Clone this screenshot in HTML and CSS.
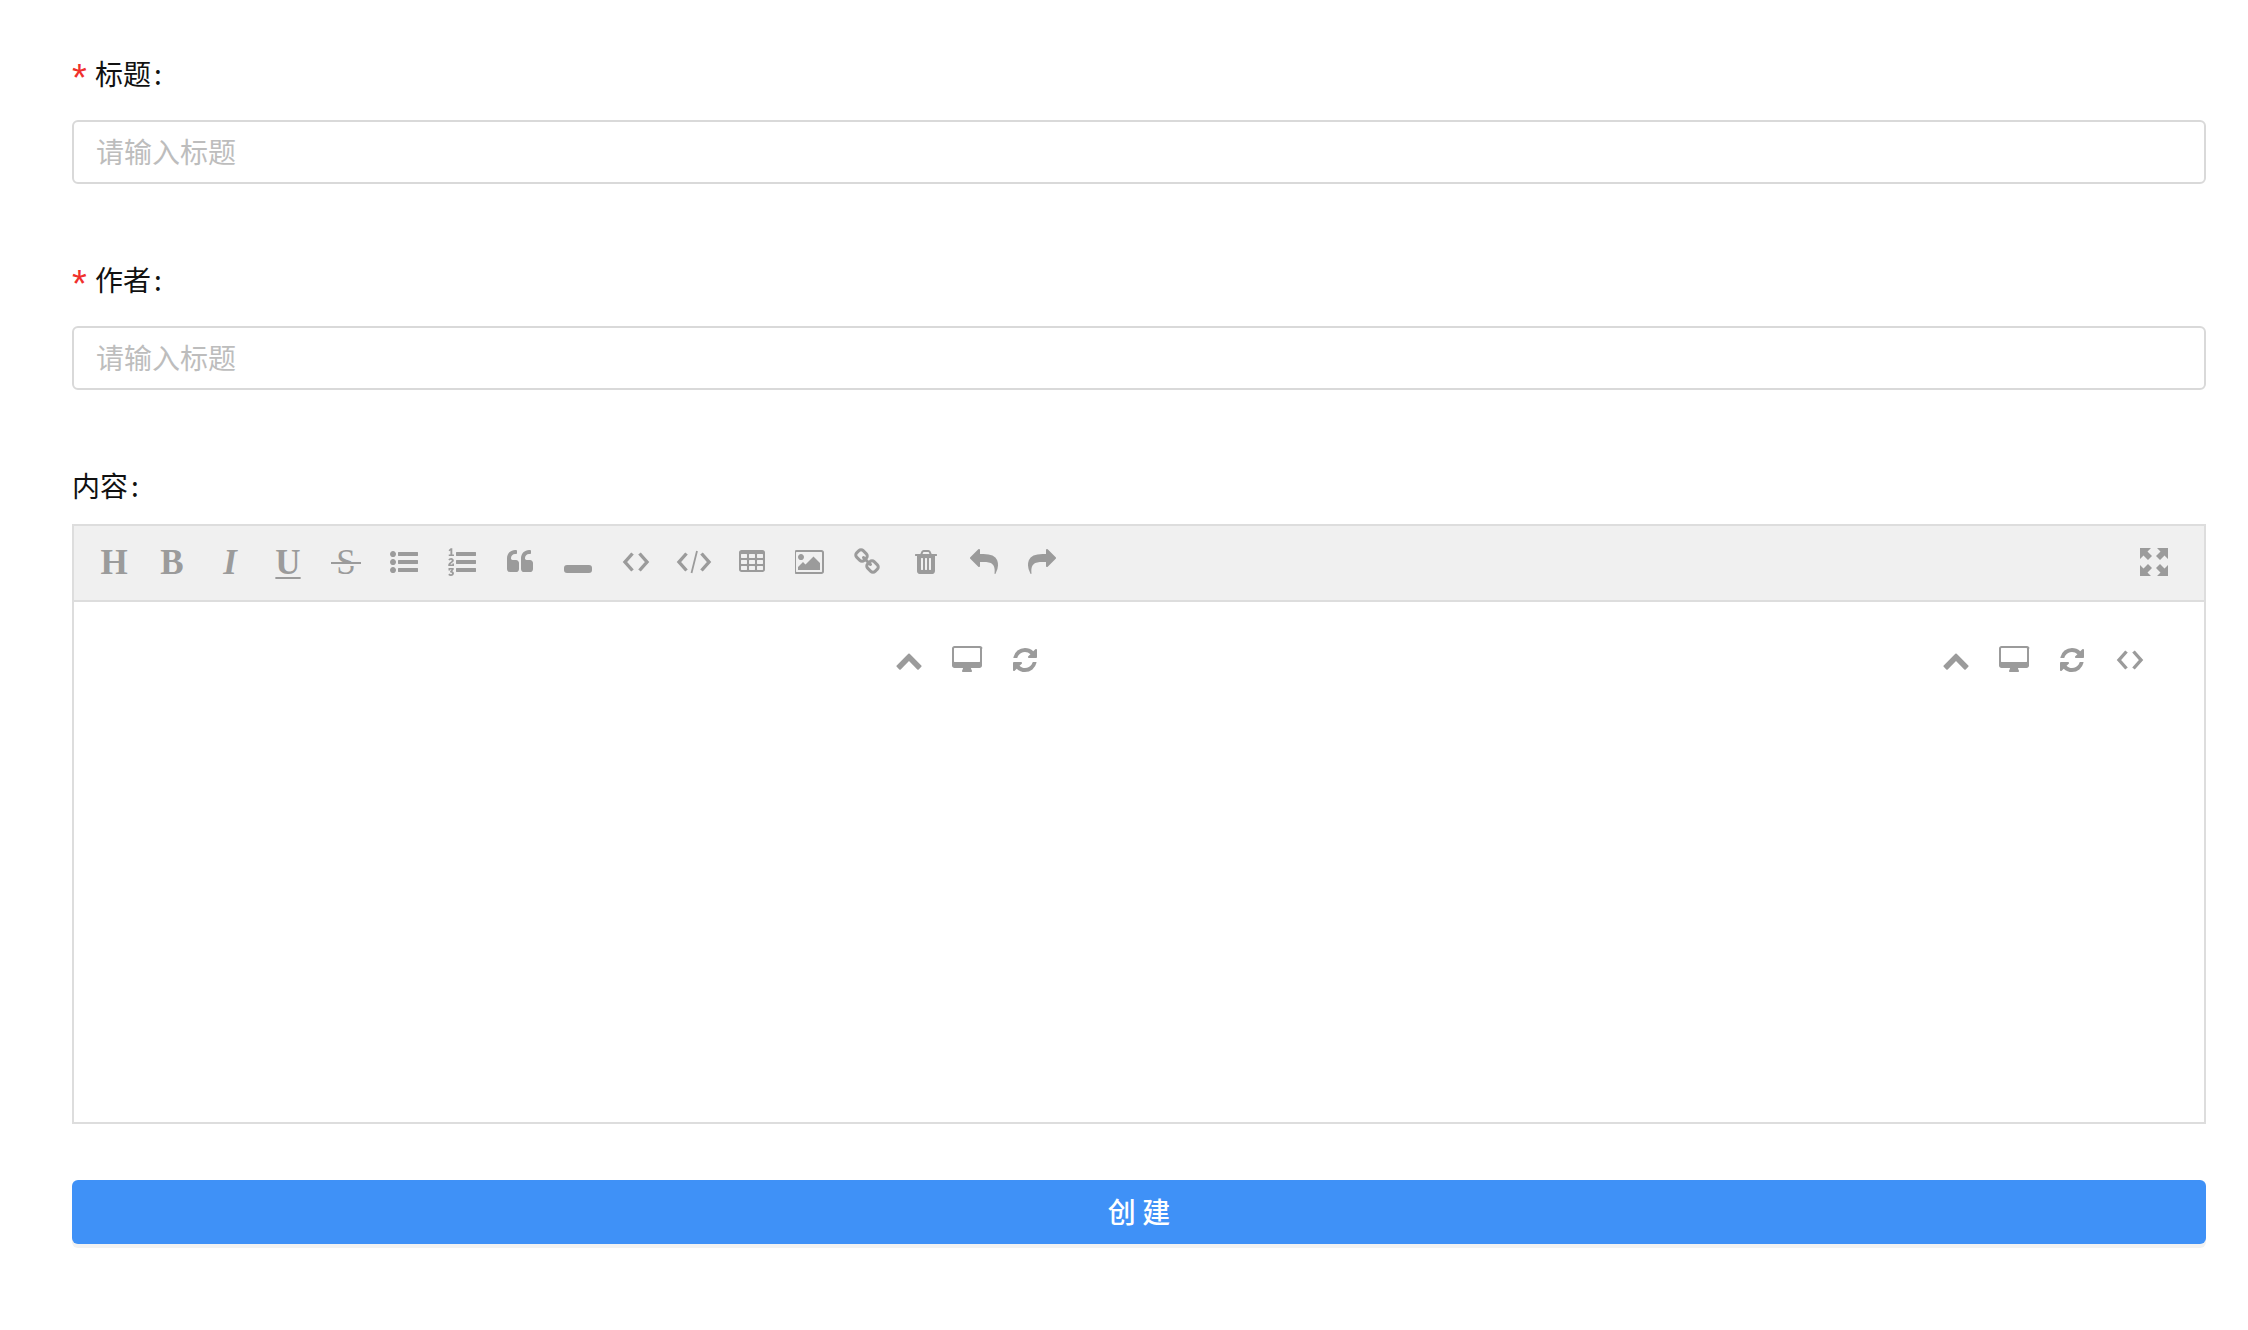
FILE: index.html
```html
<!DOCTYPE html>
<html lang="zh-CN">
<head>
<meta charset="utf-8">
<title>创建</title>
<link rel="stylesheet" href="styles.css">
</head>
<body>
<svg class="defs" xmlns="http://www.w3.org/2000/svg">
  <symbol id="i-ul" viewBox="0 0 1792 1792"><path d="M384 1408q0 80-56 136t-136 56-136-56-56-136 56-136 136-56 136 56 56 136zm0-512q0 80-56 136t-136 56-136-56-56-136 56-136 136-56 136 56 56 136zm1408 416v192q0 13-9.5 22.5t-22.5 9.5h-1216q-13 0-22.5-9.5t-9.5-22.5v-192q0-13 9.5-22.5t22.5-9.5h1216q13 0 22.5 9.5t9.5 22.5zm-1408-928q0 80-56 136t-136 56-136-56-56-136 56-136 136-56 136 56 56 136zm1408 416v192q0 13-9.5 22.5t-22.5 9.5h-1216q-13 0-22.5-9.5t-9.5-22.5v-192q0-13 9.5-22.5t22.5-9.5h1216q13 0 22.5 9.5t9.5 22.5zm0-512v192q0 13-9.5 22.5t-22.5 9.5h-1216q-13 0-22.5-9.5t-9.5-22.5v-192q0-13 9.5-22.5t22.5-9.5h1216q13 0 22.5 9.5t9.5 22.5z"/></symbol>
  <symbol id="i-ol" viewBox="0 0 1792 1792"><path d="M381 1620q0 80-54.500 126t-135.500 46q-106 0-172-66l57-88q49 45 106 45 29 0 50.500-14.500t21.500-42.500q0-64-105-56l-26-56q8-10 32.500-43.500t42.500-54 37-38.500v-1q-16 0-48.500 1t-48.500 1v53h-106v-152h333v88l-95 115q51 12 81 49t30 88zm2-627v159h-362q-6-36-6-54 0-51 23.500-93t56.500-68 66-47.500 56.500-43.500 23.500-45q0-25-14.500-38.500t-39.500-13.500q-46 0-81 58l-85-59q24-51 71.500-79.500t105.500-28.500q73 0 123 41.500t50 112.500q0 50-34 91.500t-75 64.500-75.500 50.500-35.500 52.500h127v-60h105zm1409 319v192q0 13-9.500 22.500t-22.500 9.500h-1216q-13 0-22.500-9.500t-9.500-22.500v-192q0-14 9-23t23-9h1216q13 0 22.500 9.500t9.500 22.500zm-1408-899v99h-335v-99h107q0-41 .5-122t.5-121v-12h-2q-8 17-50 54l-71-76 136-127h106v404h108zm1408 387v192q0 13-9.500 22.500t-22.500 9.500h-1216q-13 0-22.500-9.500t-9.500-22.500v-192q0-14 9-23t23-9h1216q13 0 22.500 9.500t9.500 22.500zm0-512v192q0 13-9.500 22.500t-22.500 9.500h-1216q-13 0-22.500-9.500t-9.500-22.500v-192q0-13 9.500-22.500t22.500-9.500h1216q13 0 22.500 9.500t9.500 22.500z"/></symbol>
  <symbol id="i-quote" viewBox="0 0 1792 1792"><path d="M832 960v384q0 80-56 136t-136 56h-384q-80 0-136-56t-56-136v-704q0-104 40.500-198.500t109.500-163.500 163.500-109.500 198.500-40.500h64q26 0 45 19t19 45v128q0 26-19 45t-45 19h-64q-106 0-181 75t-75 181v32q0 40 28 68t68 28h224q80 0 136 56t56 136zm896 0v384q0 80-56 136t-136 56h-384q-80 0-136-56t-56-136v-704q0-104 40.500-198.500t109.500-163.500 163.500-109.500 198.500-40.500h64q26 0 45 19t19 45v128q0 26-19 45t-45 19h-64q-106 0-181 75t-75 181v32q0 40 28 68t68 28h224q80 0 136 56t56 136z"/></symbol>
  <symbol id="i-code" viewBox="0 0 28 28"><path class="stroke" d="M10.500 5.500L3 14l7.500 8.500M17.500 5.500L25 14l-7.500 8.500"/></symbol>
  <symbol id="i-tag" viewBox="0 0 36 28"><path class="stroke" d="M10.500 5.500L3 14l7.500 8.500M25.500 5.500L33 14l-7.500 8.500"/><path class="thin" d="M21 3L15.500 25"/></symbol>
  <symbol id="i-table" viewBox="0 0 1792 1792"><path d="M576 1376v-192q0-14-9-23t-23-9h-320q-14 0-23 9t-9 23v192q0 14 9 23t23 9h320q14 0 23-9t9-23zm0-384v-192q0-14-9-23t-23-9h-320q-14 0-23 9t-9 23v192q0 14 9 23t23 9h320q14 0 23-9t9-23zm512 384v-192q0-14-9-23t-23-9h-320q-14 0-23 9t-9 23v192q0 14 9 23t23 9h320q14 0 23-9t9-23zm-512-768v-192q0-14-9-23t-23-9h-320q-14 0-23 9t-9 23v192q0 14 9 23t23 9h320q14 0 23-9t9-23zm512 384v-192q0-14-9-23t-23-9h-320q-14 0-23 9t-9 23v192q0 14 9 23t23 9h320q14 0 23-9t9-23zm512 384v-192q0-14-9-23t-23-9h-320q-14 0-23 9t-9 23v192q0 14 9 23t23 9h320q14 0 23-9t9-23zm-512-768v-192q0-14-9-23t-23-9h-320q-14 0-23 9t-9 23v192q0 14 9 23t23 9h320q14 0 23-9t9-23zm512 384v-192q0-14-9-23t-23-9h-320q-14 0-23 9t-9 23v192q0 14 9 23t23 9h320q14 0 23-9t9-23zm0-384v-192q0-14-9-23t-23-9h-320q-14 0-23 9t-9 23v192q0 14 9 23t23 9h320q14 0 23-9t9-23zm128-320v1088q0 66-47 113t-113 47h-1344q-66 0-113-47t-47-113v-1088q0-66 47-113t113-47h1344q66 0 113 47t47 113z"/></symbol>
  <symbol id="i-pic" viewBox="0 0 1920 1792"><path d="M576 576q0 80-56 136t-136 56-136-56-56-136 56-136 136-56 136 56 56 136zm1024 384v448h-1408v-192l320-320 160 160 512-512zm96-704h-1600q-13 0-22.500 9.500t-9.500 22.500v1216q0 13 9.500 22.500t22.500 9.500h1600q13 0 22.500-9.500t9.500-22.500v-1216q0-13-9.500-22.500t-22.500-9.500zm160 32v1216q0 66-47 113t-113 47h-1600q-66 0-113-47t-47-113v-1216q0-66 47-113t113-47h1600q66 0 113 47t47 113z"/></symbol>
  <symbol id="i-link" viewBox="0 0 1792 1792"><path d="M1456 1216q0-40-28-68l-208-208q-28-28-68-28-42 0-72 32 3 3 19 18.500t21.500 21.500 15 19 13 25.500 3.500 27.500q0 40-28 68t-68 28q-15 0-27.500-3.500t-25.500-13-19-15-21.500-21.500-18.500-19q-33 31-33 73 0 40 28 68l206 207q27 27 68 27 40 0 68-26l147-146q28-28 28-67zm-703-705q0-40-28-68l-206-207q-28-28-68-28-39 0-68 27l-147 146q-28 28-28 67 0 40 28 68l208 208q27 27 68 27 42 0 72-31-3-3-19-18.500t-21.500-21.500-15-19-13-25.500-3.500-27.500q0-40 28-68t68-28q15 0 27.500 3.500t25.500 13 19 15 21.500 21.500 18.500 19q33-31 33-73zm895 705q0 120-85 203l-147 146q-83 83-203 83-121 0-204-85l-206-207q-83-83-83-203 0-123 88-209l-88-88q-86 88-208 88-120 0-204-84l-208-208q-84-84-84-204t85-203l147-146q83-83 203-83 121 0 204 85l206 207q83 83 83 203 0 123-88 209l88 88q86-88 208-88 120 0 204 84l208 208q84 84 84 204z"/></symbol>
  <symbol id="i-trash" viewBox="0 0 1792 1792"><path d="M704 1376v-704q0-14-9-23t-23-9h-64q-14 0-23 9t-9 23v704q0 14 9 23t23 9h64q14 0 23-9t9-23zm256 0v-704q0-14-9-23t-23-9h-64q-14 0-23 9t-9 23v704q0 14 9 23t23 9h64q14 0 23-9t9-23zm256 0v-704q0-14-9-23t-23-9h-64q-14 0-23 9t-9 23v704q0 14 9 23t23 9h64q14 0 23-9t9-23zm-544-992h448l-48-117q-7-9-17-11h-317q-10 2-17 11zm928 32v64q0 14-9 23t-23 9h-96v948q0 83-47 143.500t-113 60.500h-832q-66 0-113-58.500t-47-141.500v-952h-96q-14 0-23-9t-9-23v-64q0-14 9-23t23-9h309l70-167q15-37 54-63t79-26h320q40 0 79 26t54 63l70 167h309q14 0 23 9t9 23z"/></symbol>
  <symbol id="i-undo" viewBox="0 0 1792 1792"><path d="M1792 1120q0 166-127 451-3 7-10.500 24t-13.500 30-13 22q-12 17-28 17-15 0-23.500-10t-8.500-25q0-9 2.500-26.500t2.500-23.500q5-68 5-123 0-101-17.500-181t-48.500-138.500-80-101-105.500-69.500-133-42.500-154-21.500-175.500-6h-224v256q0 26-19 45t-45 19-45-19l-512-512q-19-19-19-45t19-45l512-512q19-19 45-19t45 19 19 45v256h224q713 0 875 403 53 134 53 333z"/></symbol>
  <symbol id="i-redo" viewBox="0 0 1792 1792"><path d="M1792 640q0 26-19 45l-512 512q-19 19-45 19t-45-19-19-45v-256h-224q-98 0-175.500 6t-154 21.500-133 42.500-105.500 69.500-80 101-48.500 138.500-17.500 181q0 55 5 123 0 6 2.500 23.500t2.500 26.500q0 15-8.500 25t-23.500 10q-16 0-28-17-7-9-13-22t-13.500-30-10.500-24q-127-285-127-451 0-199 53-333 162-403 875-403h224v-256q0-26 19-45t45-19 45 19l512 512q19 19 19 45z"/></symbol>
  <symbol id="i-full" viewBox="0 0 28 28"><path d="M0 0H11L7.500 3.500 12 8 8 12 3.500 7.500 0 11zM28 0V11L24.500 7.500 20 12 16 8 20.500 3.500 17 0zM0 28V17L3.500 20.500 8 16 12 20 7.500 24.500 11 28zM28 28H17L20.500 24.500 16 20 20 16 24.500 20.500 28 17z"/></symbol>
  <symbol id="i-up" viewBox="0 0 1792 1792"><path d="M1683 1331l-166 165q-19 19-45 19t-45-19l-531-531-531 531q-19 19-45 19t-45-19l-166-165q-19-19-19-45.500t19-45.500l742-741q19-19 45-19t45 19l742 741q19 19 19 45.500t-19 45.500z"/></symbol>
  <symbol id="i-desk" viewBox="0 0 2048 1792"><path d="M1856 992v-832q0-13-9.500-22.500t-22.500-9.500h-1600q-13 0-22.500 9.500t-9.500 22.500v832q0 13 9.500 22.500t22.500 9.500h1600q13 0 22.500-9.500t9.500-22.500zm128-832v1088q0 66-47 113t-113 47h-544q0 37 16 77.500t32 71 16 43.500q0 26-19 45t-45 19h-512q-26 0-45-19t-19-45q0-14 16-44t32-70 16-78h-544q-66 0-113-47t-47-113v-1088q0-66 47-113t113-47h1632q66 0 113 47t47 113z"/></symbol>
  <symbol id="i-sync" viewBox="0 0 1792 1792"><path d="M1639 1056q0 5-1 7-64 268-268 434.500t-478 166.500q-146 0-282.500-55t-243.500-157l-129 129q-19 19-45 19t-45-19-19-45v-448q0-26 19-45t45-19h448q26 0 45 19t19 45-19 45l-137 137q71 66 161 102t187 36q134 0 250-65t186-179q11-17 53-117 8-23 30-23h192q13 0 22.500 9.500t9.500 22.500zm25-800v448q0 26-19 45t-45 19h-448q-26 0-45-19t-19-45 19-45l138-138q-148-137-349-137-134 0-250 65t-186 179q-11 17-53 117-8 23-30 23h-199q-13 0-22.500-9.500t-9.500-22.500v-7q65-268 270-434.500t480-166.500q146 0 284 55.500t245 156.500l130-129q19-19 45-19t45 19 19 45z"/></symbol>
</svg>

<form class="form">
  <div class="field">
    <label class="label"><span class="req">*</span>标题<span class="colon">:</span></label>
    <input class="input" type="text" placeholder="请输入标题">
  </div>
  <div class="field">
    <label class="label"><span class="req">*</span>作者<span class="colon">:</span></label>
    <input class="input" type="text" placeholder="请输入标题">
  </div>
  <div class="field field-editor">
    <label class="label">内容<span class="colon">:</span></label>
    <div class="editor">
      <div class="toolbar">
        <div class="tools">
          <span class="tool letter">H</span>
          <span class="tool letter">B</span>
          <span class="tool letter it">I</span>
          <span class="tool letter"><span class="un">U</span></span>
          <span class="tool letter"><span class="st">S</span></span>
          <span class="tool"><svg class="ic"><use href="#i-ul"/></svg></span>
          <span class="tool"><svg class="ic"><use href="#i-ol"/></svg></span>
          <span class="tool"><svg class="ic"><use href="#i-quote"/></svg></span>
          <span class="tool"><span class="hr"></span></span>
          <span class="tool"><svg class="ic"><use href="#i-code"/></svg></span>
          <span class="tool"><svg class="ic wide"><use href="#i-tag"/></svg></span>
          <span class="tool"><svg class="ic"><use href="#i-table"/></svg></span>
          <span class="tool"><svg class="ic pic"><use href="#i-pic"/></svg></span>
          <span class="tool"><svg class="ic"><use href="#i-link"/></svg></span>
          <span class="tool"><svg class="ic"><use href="#i-trash"/></svg></span>
          <span class="tool"><svg class="ic"><use href="#i-undo"/></svg></span>
          <span class="tool"><svg class="ic"><use href="#i-redo"/></svg></span>
        </div>
        <span class="tool"><svg class="ic"><use href="#i-full"/></svg></span>
      </div>
      <div class="panes">
        <div class="pane pane-left">
          <span class="tool"><svg class="ic"><use href="#i-up"/></svg></span>
          <span class="tool"><svg class="ic desk"><use href="#i-desk"/></svg></span>
          <span class="tool"><svg class="ic"><use href="#i-sync"/></svg></span>
        </div>
        <div class="pane pane-right">
          <span class="tool"><svg class="ic"><use href="#i-up"/></svg></span>
          <span class="tool"><svg class="ic desk"><use href="#i-desk"/></svg></span>
          <span class="tool"><svg class="ic"><use href="#i-sync"/></svg></span>
          <span class="tool"><svg class="ic"><use href="#i-code"/></svg></span>
        </div>
      </div>
    </div>
  </div>
  <button class="submit" type="button">创 建</button>
</form>
</body>
</html>
```

FILE: styles.css
```css
* { box-sizing: border-box; }

html, body { margin: 0; background: #fff; }

body {
  font-family: "Noto Sans CJK SC", "Noto Sans", sans-serif;
  font-size: 28px;
  color: #111;
}

.defs { display: none; }

.form {
  display: flex;
  flex-direction: column;
  padding: 46px 42px 82px 72px;
}

.field { display: flex; flex-direction: column; margin-bottom: 68px; }
.field-editor { margin-bottom: 56px; }

.label {
  display: flex;
  align-items: center;
  height: 56px;
  padding-bottom: 3px;
  margin-bottom: 18px;
}
.field-editor .label { margin-bottom: 10px; }

.req {
  width: 23px;
  margin-top: 11px;
  color: #f0302c;
  font-family: "Liberation Sans", sans-serif;
  font-size: 38px;
  line-height: 38px;
}

.colon { margin-left: 3px; }

.input {
  height: 64px;
  padding: 0 22px 2px;
  border: 2px solid #d9d9d9;
  border-radius: 6px;
  background: #fff;
  font: inherit;
  color: #111;
  outline: none;
}
.input::placeholder { color: #bdbdbd; opacity: 1; }

.editor {
  display: flex;
  flex-direction: column;
  height: 600px;
  border: 2px solid #dddddd;
}

.toolbar {
  display: flex;
  align-items: center;
  justify-content: space-between;
  height: 76px;
  padding: 0 21px 2px 11px;
  border-bottom: 2px solid #dddddd;
  background: #f0f0f0;
}

.tools { display: flex; }

.tool {
  display: flex;
  align-items: center;
  justify-content: center;
  width: 58px;
  height: 58px;
  color: #9b9b9b;
  fill: #9b9b9b;
}

.ic { width: 28px; height: 28px; }
.ic.wide { width: 36px; }
.ic.pic { width: 30px; }
.ic.desk { width: 32px; }

.stroke { fill: none; stroke: #9b9b9b; stroke-width: 3.4; }
.thin { fill: none; stroke: #9b9b9b; stroke-width: 1.8; }

.letter {
  font-family: "Liberation Serif", serif;
  font-size: 35px;
  font-weight: 700;
  line-height: 1;
}
.it { font-style: italic; }

.un {
  text-decoration: underline;
  text-decoration-thickness: 2px;
  text-decoration-skip-ink: none;
  text-underline-offset: 3px;
}

.st { position: relative; font-weight: 400; }
.st::after {
  content: "";
  position: absolute;
  left: -5px;
  right: -5px;
  top: 50%;
  height: 2px;
  background: #9b9b9b;
  box-shadow: 0 2px 0 #f0f0f0;
}

.hr {
  width: 28px;
  height: 8px;
  margin-top: 14px;
  border-radius: 3px;
  background: #9b9b9b;
}

.panes { display: flex; flex: 1; }

.pane {
  display: flex;
  flex: 0 0 50%;
  justify-content: flex-end;
  align-items: flex-start;
  padding-top: 29px;
}
.pane-left { padding-right: 85px; }
.pane-right { padding-right: 45px; }

.submit {
  height: 64px;
  padding: 0 0 2px;
  border: 0;
  border-radius: 6px;
  background: #3f91f7;
  box-shadow: 0 4px 0 #f2f2f2;
  color: #fff;
  font: inherit;
  font-size: 28px;
  font-weight: 500;
}
```
